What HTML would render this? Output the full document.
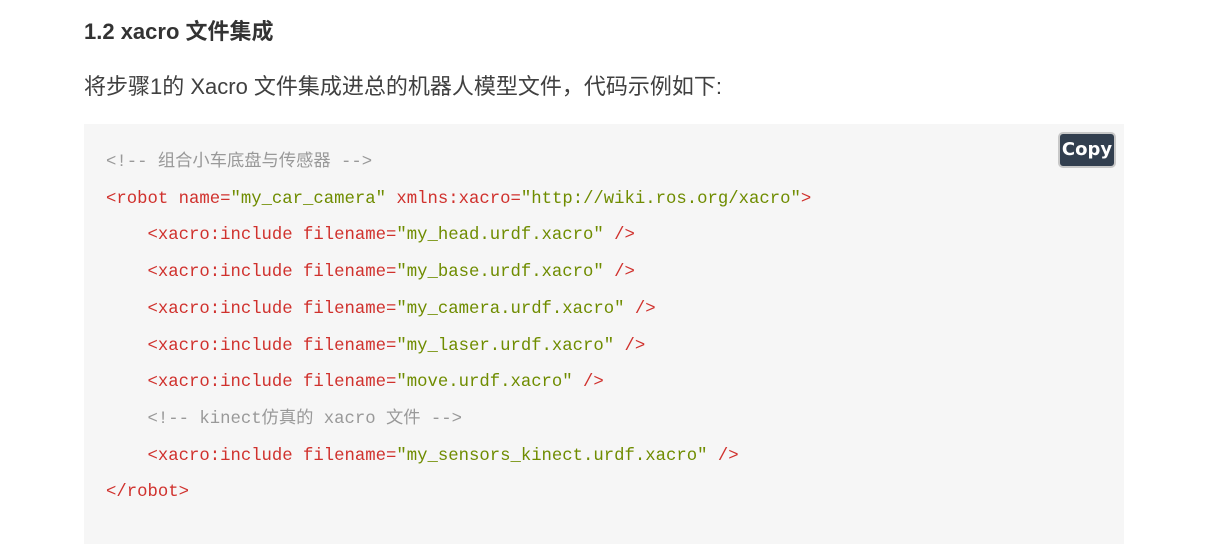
<!DOCTYPE html>
<html><head><meta charset="utf-8"><style>
body{margin:0;background:#fff;width:1220px;height:527px;overflow:hidden;font-family:"Liberation Sans","Noto Sans CJK SC",sans-serif;}
h3{position:absolute;left:84px;top:17px;margin:0;font-size:22px;font-weight:bold;color:#333;line-height:30px;}
p{position:absolute;left:84px;top:71px;margin:0;font-size:22px;color:#404040;line-height:32px;}
.code{position:absolute;left:84px;top:124px;width:1040px;height:420px;background:#f6f6f6;}
pre{margin:0;position:absolute;left:22px;top:21px;font-family:"Liberation Mono","Noto Sans CJK SC",monospace;font-size:17.3px;line-height:36.7px;color:#333;}
.c{color:#999}.t{color:#d0312d}.s{color:#6f8c00}
.copy{position:absolute;left:1058px;top:132px;width:54px;height:32px;background:#323f4f;border:2px solid #c8c8c8;border-radius:5px;color:#fff;font-weight:bold;font-size:18px;line-height:32px;text-align:center;font-family:"DejaVu Sans","Liberation Sans",sans-serif;}
</style></head><body>
<h3>1.2 xacro 文件集成</h3>
<p>将步骤1的 Xacro 文件集成进总的机器人模型文件，代码示例如下:</p>
<div class="code"><pre><span class="c">&lt;!-- 组合小车底盘与传感器 --&gt;</span>
<span class="t">&lt;robot name=</span><span class="s">"my_car_camera"</span><span class="t"> xmlns:xacro=</span><span class="s">"http://wiki.ros.org/xacro"</span><span class="t">&gt;</span>
    <span class="t">&lt;xacro:include filename=</span><span class="s">"my_head.urdf.xacro"</span><span class="t"> /&gt;</span>
    <span class="t">&lt;xacro:include filename=</span><span class="s">"my_base.urdf.xacro"</span><span class="t"> /&gt;</span>
    <span class="t">&lt;xacro:include filename=</span><span class="s">"my_camera.urdf.xacro"</span><span class="t"> /&gt;</span>
    <span class="t">&lt;xacro:include filename=</span><span class="s">"my_laser.urdf.xacro"</span><span class="t"> /&gt;</span>
    <span class="t">&lt;xacro:include filename=</span><span class="s">"move.urdf.xacro"</span><span class="t"> /&gt;</span>
    <span class="c">&lt;!-- kinect仿真的 xacro 文件 --&gt;</span>
    <span class="t">&lt;xacro:include filename=</span><span class="s">"my_sensors_kinect.urdf.xacro"</span><span class="t"> /&gt;</span>
<span class="t">&lt;/robot&gt;</span></pre></div>
<div class="copy">Copy</div>
</body></html>
